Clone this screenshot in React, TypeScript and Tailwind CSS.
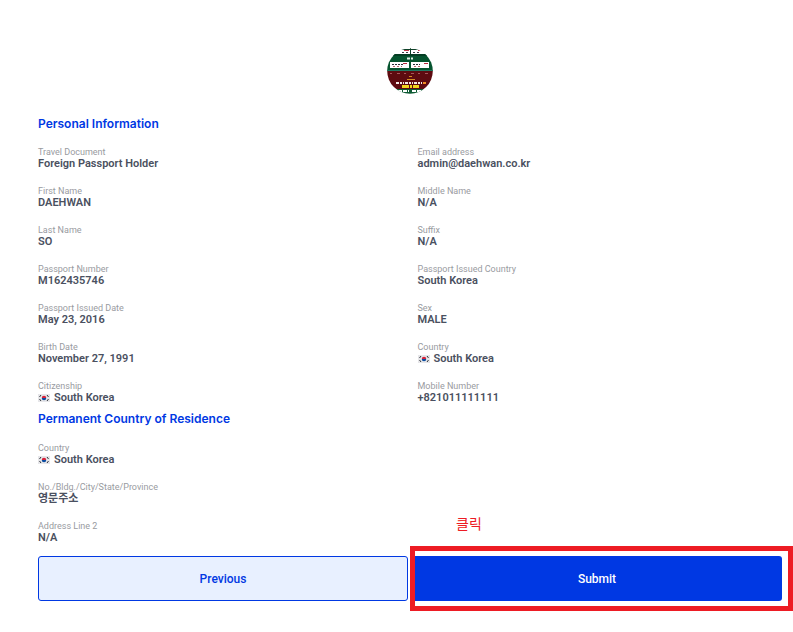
import React from 'react';

interface Field {
  label: string;
  value: string;
  flag?: boolean;
}

// Listed row by row, left column first
const personalFields: Field[] = [
  { label: 'Travel Document', value: 'Foreign Passport Holder' },
  { label: 'Email address', value: 'admin@daehwan.co.kr' },
  { label: 'First Name', value: 'DAEHWAN' },
  { label: 'Middle Name', value: 'N/A' },
  { label: 'Last Name', value: 'SO' },
  { label: 'Suffix', value: 'N/A' },
  { label: 'Passport Number', value: 'M162435746' },
  { label: 'Passport Issued Country', value: 'South Korea' },
  { label: 'Passport Issued Date', value: 'May 23, 2016' },
  { label: 'Sex', value: 'MALE' },
  { label: 'Birth Date', value: 'November 27, 1991' },
  { label: 'Country', value: 'South Korea', flag: true },
  { label: 'Citizenship', value: 'South Korea', flag: true },
  { label: 'Mobile Number', value: '+821011111111' },
];

const residenceFields: Field[] = [
  { label: 'Country', value: 'South Korea', flag: true },
  { label: 'No./Bldg./City/State/Province', value: '영문주소' },
  { label: 'Address Line 2', value: 'N/A' },
];

const KoreaFlag = () => (
  <svg viewBox="0 0 24 16" className="w-3 h-2 shrink-0" aria-hidden="true">
    <rect width="24" height="16" fill="#e6e6e9" />
    <path d="M7.5 8a4.5 4.5 0 0 1 9 0z" fill="#d8213b" />
    <path d="M7.5 8a4.5 4.5 0 0 0 9 0z" fill="#0b4da2" />
    <path d="M3 6l3-4M18 2l3 4M3 10l3 4M18 14l3-4" stroke="#33363d" strokeWidth="2" />
  </svg>
);

const Avatar = () => (
  <svg viewBox="0 0 46 46" className="w-[46px] h-[46px]" role="img" aria-label="Profile photo">
    <defs>
      <clipPath id="avatar-circle">
        <circle cx="23" cy="23" r="22.8" />
      </clipPath>
    </defs>
    <g clipPath="url(#avatar-circle)">
      <rect width="46" height="46" fill="#fff" />
      <path d="M0 1.5h46M23.5 0v7" stroke="#0c3f26" strokeWidth="1" />
      <path d="M15 4.5h7M26 4.5h6" stroke="#3c3f45" strokeWidth="1" strokeDasharray="2 2" />
      <path d="M17 2.5h5M31 2.5h4" stroke="#c23a4a" strokeWidth="1" />
      <rect y="6" width="46" height="17" fill="#06542f" />
      <path d="M0 7h46" stroke="#043d23" strokeWidth="2" />
      <path d="M20 10.5h6" stroke="#e2f0e7" strokeWidth="2" strokeDasharray="3 1" />
      <rect x="3" y="14" width="19" height="6" fill="#fff" />
      <rect x="24" y="14" width="18" height="6" fill="#fff" />
      <path d="M5 16.5h11M26 16.5h7" stroke="#2b2f38" strokeWidth="1" strokeDasharray="2 1" />
      <path d="M6 18.5h9M27 18.5h8" stroke="#b5686e" strokeWidth="1" strokeDasharray="2 2" />
      <path d="M16 15.5h4M37 15.5h4" stroke="#b92c3d" strokeWidth="1" />
      <path d="M0 22.5h46" stroke="#1d7861" strokeWidth="1" />
      <rect y="23" width="46" height="18" fill="#5d0b10" />
      <path d="M3 25.5h40" stroke="#a8565c" strokeWidth="1" strokeDasharray="2 5 3 4" />
      <path d="M22 28.5h3M20 31.5h8" stroke="#d18a24" strokeWidth="1" />
      <path d="M9 35h27" stroke="#f4e9e5" strokeWidth="2" strokeDasharray="3 1 2 1 1 1" />
      <path d="M36 35h3" stroke="#f08a21" strokeWidth="2" />
      <path d="M15 38.5h17" stroke="#f1d61f" strokeWidth="3" strokeDasharray="7 1 2 1" />
      <rect y="41" width="46" height="5" fill="#0d5a33" />
      <path d="M11 43h11M25 43h10" stroke="#fff" strokeWidth="2" strokeDasharray="4 1" />
    </g>
  </svg>
);

const FieldGrid: React.FC<{ fields: Field[]; className: string }> = ({ fields, className }) => (
  <dl className={`grid gap-x-[15px] gap-y-4 ${className}`}>
    {fields.map((field, index) => (
      <div key={index}>
        <dt className="text-[9px] leading-[11px] text-[#999b9f]">{field.label}</dt>
        <dd className="flex items-center gap-1 text-[11px] leading-3 font-semibold text-[#4a5060]">
          {field.flag && <KoreaFlag />}
          {field.value}
        </dd>
      </div>
    ))}
  </dl>
);

export default function App() {
  return (
    <main className="bg-white pt-12 pb-6 pl-[38px] pr-[11px] font-['Roboto','Noto_Sans_CJK_KR',sans-serif]">
      <div className="flex justify-center mb-[22px]">
        <Avatar />
      </div>

      <section className="mb-[7px]">
        <h2 className="mb-[15px] font-['Inter'] text-xs leading-4 font-semibold text-[#0038e3]">Personal Information</h2>
        <FieldGrid fields={personalFields} className="grid-cols-2" />
      </section>

      <section className="mb-3">
        <h2 className="mb-4 font-['Inter'] text-xs leading-4 font-semibold text-[#0038e3]">
          Permanent Country of Residence
        </h2>
        <FieldGrid fields={residenceFields} className="grid-cols-1" />
      </section>

      <div className="grid grid-cols-2 gap-1">
        <button
          type="button"
          className="h-[45px] rounded-[3px] border border-[#0038e3] bg-[#e8f0ff] text-xs font-medium text-[#0038e3]"
        >
          Previous
        </button>
        <div className="relative flex">
          <button type="submit" className="h-[45px] flex-1 rounded-[3px] bg-[#0038e3] text-xs font-medium text-white">
            Submit
          </button>
          {/* Callout around the submit button */}
          <div className="pointer-events-none absolute -inset-y-2.5 -left-0.5 -right-[11px] border-5 border-[#ed1c24]" />
          <span className="absolute -top-10 left-11 text-sm leading-4 text-[#ed1c24]">클릭</span>
        </div>
      </div>
    </main>
  );
}
